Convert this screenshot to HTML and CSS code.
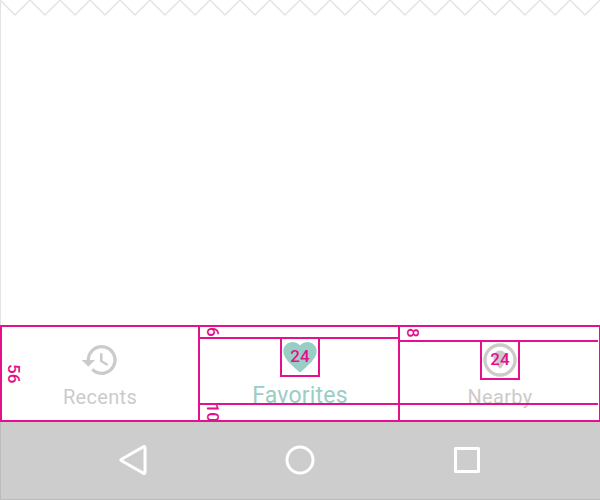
FILE: index.html
```
<!DOCTYPE html>
<html lang="en">
<head>
<meta charset="utf-8">
<title>Bottom navigation specs</title>
<link rel="stylesheet" href="styles.css">
</head>
<body>
<main class="screen">
  <section class="content">
    <svg class="torn" width="600" height="20" viewBox="0 0 600 20"><defs><pattern id="zigzag" width="30" height="20" patternUnits="userSpaceOnUse"><path d="M-1-1L15 15L31-1"/></pattern></defs><rect width="600" height="20" fill="url(#zigzag)" stroke="none"/></svg>
  </section>
  <nav class="tabs">
    <div class="tab recents">
      <span class="measure height">56</span>
      <svg class="icon" width="40" height="40" viewBox="0 0 24 24"><path d="M13 3a9 9 0 0 0-9 9H1l3.89 3.89.07.14L9 12H6c0-3.87 3.13-7 7-7s7 3.13 7 7-3.13 7-7 7c-1.93 0-3.68-.79-4.94-2.06l-1.42 1.42A9 9 0 1 0 13 3zm-1 5v5l4.28 2.54.72-1.21-3.5-2.08V8H12z"/></svg>
      <span class="label">Recents</span>
    </div>
    <div class="tab favorites">
      <span class="measure top">6</span>
      <div class="icon-box">
        <svg class="icon" width="40" height="40" viewBox="0 0 24 24"><path d="M12 21.35l-1.45-1.32C5.4 15.36 2 12.28 2 8.5 2 5.42 4.42 3 7.5 3c1.74 0 3.41.81 4.5 2.09C13.09 3.81 14.76 3 16.5 3 19.58 3 22 5.42 22 8.5c0 3.78-3.4 6.86-8.55 11.54L12 21.35z"/></svg>
        <span class="size">24</span>
      </div>
      <span class="label">Favorites</span>
      <span class="measure bottom">10</span>
    </div>
    <div class="tab nearby">
      <span class="measure top">8</span>
      <div class="icon-box">
        <svg class="icon" width="40" height="40" viewBox="0 0 24 24"><path d="M12 2a10 10 0 1 0 0 20 10 10 0 0 0 0-20zm0 18a8 8 0 1 1 0-16 8 8 0 0 1 0 16z"/><path d="M12 17.3C9.8 14.9 8 12.3 8 10.3a4 4 0 0 1 8 0c0 2-1.800 4.600-4 7z"/></svg>
        <span class="size">24</span>
      </div>
      <span class="label">Nearby</span>
      <span class="measure bottom"></span>
    </div>
  </nav>
  <footer class="system">
    <svg width="40" height="40" viewBox="0 0 40 40"><path d="M8.500 19.200L30.500 6.700Q32 6 32 8V32Q32 34 30.500 33.300L8.500 20.800Q7 20 8.500 19.200Z"/></svg>
    <svg width="40" height="40" viewBox="0 0 40 40"><circle cx="20" cy="20" r="13"/></svg>
    <svg width="40" height="40" viewBox="0 0 40 40"><rect x="8.500" y="8.500" width="23" height="23"/></svg>
  </footer>
</main>
</body>
</html>
```
FILE: styles.css
```
* { box-sizing: border-box; }
body { margin: 0; background: #fff; font-family: Roboto, sans-serif; }
.screen { width: 600px; height: 500px; display: grid; grid-template-rows: 325px 96px 79px; }
.content { border: solid #e4e4e4; border-width: 0 1px; }
.torn { display: block; margin-left: -1px; fill: none; stroke: #e4e4e4; stroke-width: 1.5; }
.tabs { display: grid; grid-template-columns: 198px 200px 198px; border: 2px solid #e5108b; margin-bottom: -1px; z-index: 1; background: #fff; }
.tab { position: relative; display: flex; flex-direction: column; align-items: center; color: #cbcbcb; }
.recents { border-right: 2px solid #e5108b; padding-top: 13px; }
.favorites { border-right: 2px solid #e5108b; padding: 10px 0 0 2px; color: #99cec5; }
.nearby { padding: 13px 0 0 2px; }
.icon { display: block; flex: none; fill: currentColor; }
.label { font-size: 20px; line-height: 24px; letter-spacing: .3px; margin-top: 5px; }
.favorites .label { font-size: 23px; line-height: 28px; letter-spacing: .2px; margin-top: 5px; }
.icon-box { position: relative; width: 40px; height: 40px; border: 2px solid #e5108b; }
.icon-box .icon { margin: -2px; }
.size, .measure { color: #e5108b; font-size: 17px; font-weight: 500; }
.size { position: absolute; inset: -3px 0 0 0; display: grid; place-items: center; line-height: 20px; }
.measure { position: absolute; left: 0; width: 100%; writing-mode: vertical-rl; display: flex; align-items: flex-end; line-height: 20px; }
.height { top: 0; bottom: 0; justify-content: center; padding-left: 2px; }
.top { top: 0; height: 12px; border-bottom: 2px solid #e5108b; padding-left: 3px; }
.nearby .top { height: 15px; padding-left: 3px; padding-top: 1px; }
.bottom { top: 76px; height: 19px; border-top: 2px solid #e5108b; padding-left: 3px; text-indent: -2px; letter-spacing: -.5px; }
.system { background: #cdcdcd; border: solid #bcbcbc; border-width: 0 1px 1px; display: flex; justify-content: center; align-items: center; gap: 127px; padding-right: 2px; }
.system svg { fill: none; stroke: #fff; stroke-width: 3; stroke-linejoin: round; }
```
